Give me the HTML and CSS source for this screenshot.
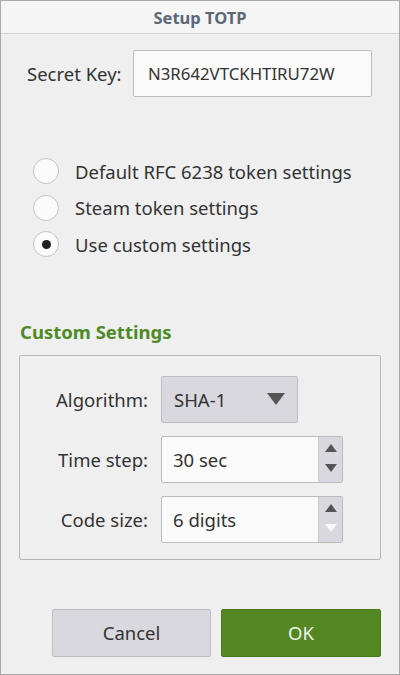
FILE: index.html
```html
<!DOCTYPE html>
<html>
<head>
<meta charset="utf-8">
<link rel="stylesheet" href="styles.css">
</head>
<body>
<div class="window">
  <div class="titlebar">Setup TOTP</div>
  <div class="content">
    <div class="secret-row">
      <span class="label">Secret Key:</span>
      <div class="input secret">N3R642VTCKHTIRU72W</div>
    </div>
    <div class="radios">
      <div class="radio-row"><span class="radio"></span><span>Default RFC 6238 token settings</span></div>
      <div class="radio-row"><span class="radio"></span><span>Steam token settings</span></div>
      <div class="radio-row"><span class="radio checked"></span><span>Use custom settings</span></div>
    </div>
    <div class="section-title">Custom Settings</div>
    <div class="group">
      <span class="glabel">Algorithm:</span>
      <div class="combo"><span>SHA-1</span><svg width="20" height="14" viewBox="0 0 20 14"><polygon points="1,1 19,1 10,13" fill="#555"/></svg></div>
      <span class="glabel">Time step:</span>
      <div class="spin"><span class="spin-text">30 sec</span><span class="spin-btns"><svg width="14" height="34" viewBox="0 0 14 34"><polygon points="1,10 13,10 7,2" fill="#555"/><polygon points="1,22 13,22 7,30" fill="#555"/></svg></span></div>
      <span class="glabel">Code size:</span>
      <div class="spin"><span class="spin-text">6 digits</span><span class="spin-btns"><svg width="14" height="34" viewBox="0 0 14 34"><polygon points="1,10 13,10 7,2" fill="#555"/><polygon points="1,22 13,22 7,30" fill="#fafafa"/></svg></span></div>
    </div>
    <div class="buttons">
      <div class="btn cancel">Cancel</div>
      <div class="btn ok">OK</div>
    </div>
  </div>
</div>
</body>
</html>
```

FILE: styles.css
```css
html, body {
  margin: 0;
  padding: 0;
  background: #efeff0;
}
body {
  font-family: "Noto Sans", "Open Sans", sans-serif;
  color: #333;
  font-size: 18.5px;
}
.window {
  width: 400px;
  height: 675px;
  box-sizing: border-box;
  border: 1px solid #a9a9a9;
  background: #efeff0;
  display: flex;
  flex-direction: column;
}
.titlebar {
  height: 33px;
  box-sizing: border-box;
  background: #f5f5f5;
  border-bottom: 1px solid #d2d2d2;
  display: flex;
  align-items: center;
  justify-content: center;
  font-weight: bold;
  font-size: 16.5px;
  color: #5c6775;
}
.content {
  display: flex;
  flex-direction: column;
  padding: 0 18px 0 18px;
}
.secret-row {
  display: flex;
  align-items: center;
  margin-top: 16px;
  padding-left: 8px;
}
.label {
  width: 106px;
}
.input {
  background: #fafafa;
  border: 1px solid #bcbcbc;
  border-radius: 2px;
  box-sizing: border-box;
  display: flex;
  align-items: center;
}
.secret {
  width: 239px;
  height: 47px;
  padding-left: 14px;
  font-size: 16.8px;
}
.radios {
  margin-top: 61px;
  display: flex;
  flex-direction: column;
  gap: 10px;
  padding-left: 14px;
}
.radio-row {
  display: flex;
  align-items: center;
  height: 26.5px;
}
.radio {
  width: 26px;
  height: 26px;
  box-sizing: border-box;
  border: 1px solid #c4c4c4;
  border-radius: 50%;
  background: #fbfbfb;
  margin-right: 16px;
  position: relative;
  flex: none;
}
.radio.checked::after {
  content: "";
  position: absolute;
  left: 8px;
  top: 8px;
  width: 9px;
  height: 9px;
  border-radius: 50%;
  background: #222;
}
.section-title {
  margin-top: 63px;
  color: #4e8a22;
  font-weight: bold;
  line-height: 22px;
  padding-left: 1px;
}
.group {
  margin-top: 12px;
  width: 362px;
  height: 205px;
  box-sizing: border-box;
  border: 1px solid #b4b4b4;
  border-radius: 2px;
  display: grid;
  grid-template-columns: 128px auto;
  column-gap: 13px;
  row-gap: 13px;
  align-content: start;
  align-items: center;
  padding-top: 20px;
}
.glabel {
  text-align: right;
}
.combo {
  width: 137px;
  height: 47px;
  box-sizing: border-box;
  background: #d8d8de;
  border: 1px solid #bdbdc3;
  border-radius: 2px;
  display: flex;
  align-items: center;
  justify-content: space-between;
  padding: 0 11px 0 12px;
}
.spin {
  width: 182px;
  height: 47px;
  box-sizing: border-box;
  border: 1px solid #bcbcbc;
  border-radius: 2px;
  display: flex;
  background: #fafafa;
  overflow: hidden;
}
.spin-text {
  flex: 1;
  display: flex;
  align-items: center;
  padding-left: 11px;
}
.spin-btns {
  width: 23px;
  background: #d8d8de;
  border-left: 1px solid #c8c8ce;
  display: flex;
  align-items: center;
  justify-content: center;
}
.buttons {
  margin-top: 49px;
  display: flex;
  gap: 10px;
  padding-left: 33px;
}
.btn {
  height: 48px;
  box-sizing: border-box;
  border-radius: 2px;
  display: flex;
  align-items: center;
  justify-content: center;
}
.cancel {
  width: 159px;
  background: #d8d8de;
  border: 1px solid #bcbcc2;
  color: #333;
}
.ok {
  width: 160px;
  background: #548722;
  border: 1px solid #4a7a1e;
  color: #eef4e8;
}
```
